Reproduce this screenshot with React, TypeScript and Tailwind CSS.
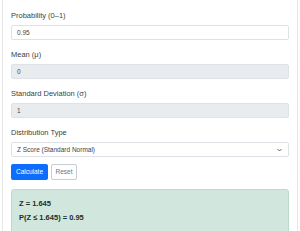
import React from 'react';

function Field({ label, value, disabled }: { label: string; value: string; disabled?: boolean }) {
  return (
    <div className="mb-[10px]">
      <div className="h-[10px] mb-[4px] text-[7.5px] leading-[10px] text-[#3a3f44]">{label}</div>
      <div
        className={
          'h-[15px] rounded-[2px] border border-[#dee2e6] pl-[5px] text-[6.5px] leading-[13px] text-[#444] ' +
          (disabled ? 'bg-[#e9ecef]' : 'bg-white')
        }
      >
        {value}
      </div>
    </div>
  );
}

export default function App() {
  return (
    <div className="w-[300px] h-[231px] bg-white overflow-hidden font-['Liberation_Sans',Arial,sans-serif]">
      <div className="mx-[2px] h-full border-x border-[#e6e6e6] px-[8px] pt-[11px]">
        <Field label="Probability (0–1)" value="0.95" />
        <Field label="Mean (μ)" value="0" disabled />
        <Field label="Standard Deviation (σ)" value="1" disabled />
        <div className="mb-[7px]">
          <div className="h-[10px] mb-[4px] text-[7.5px] leading-[10px] text-[#3a3f44]">Distribution Type</div>
          <div className="h-[15px] rounded-[2px] border border-[#dee2e6] bg-white pl-[5px] pr-[6px] flex items-center justify-between text-[6.5px] text-[#444]">
            <span>Z Score (Standard Normal)</span>
            <svg width="5" height="4" viewBox="0 0 10 8" fill="none" stroke="#555" strokeWidth="1.8">
              <path d="M1 2l4 4 4-4" />
            </svg>
          </div>
        </div>
        <div className="flex gap-[3px] mb-[9px]">
          <button className="h-[16px] w-[37px] rounded-[2px] bg-[#0d6efd] text-white text-[6.5px]">Calculate</button>
          <button className="h-[16px] w-[26px] rounded-[2px] border border-[#c8cdd2] bg-white text-[#6c757d] text-[6.5px]">Reset</button>
        </div>
        <div className="h-[48px] rounded-[3px] border border-[#badbcc] bg-[#d1e7dd] pl-[7px] pt-[7px] text-[7.5px] font-bold leading-[14px] text-[#1f2d27]">
          <div>Z = 1.645</div>
          <div>P(Z ≤ 1.645) = 0.95</div>
        </div>
      </div>
    </div>
  );
}
